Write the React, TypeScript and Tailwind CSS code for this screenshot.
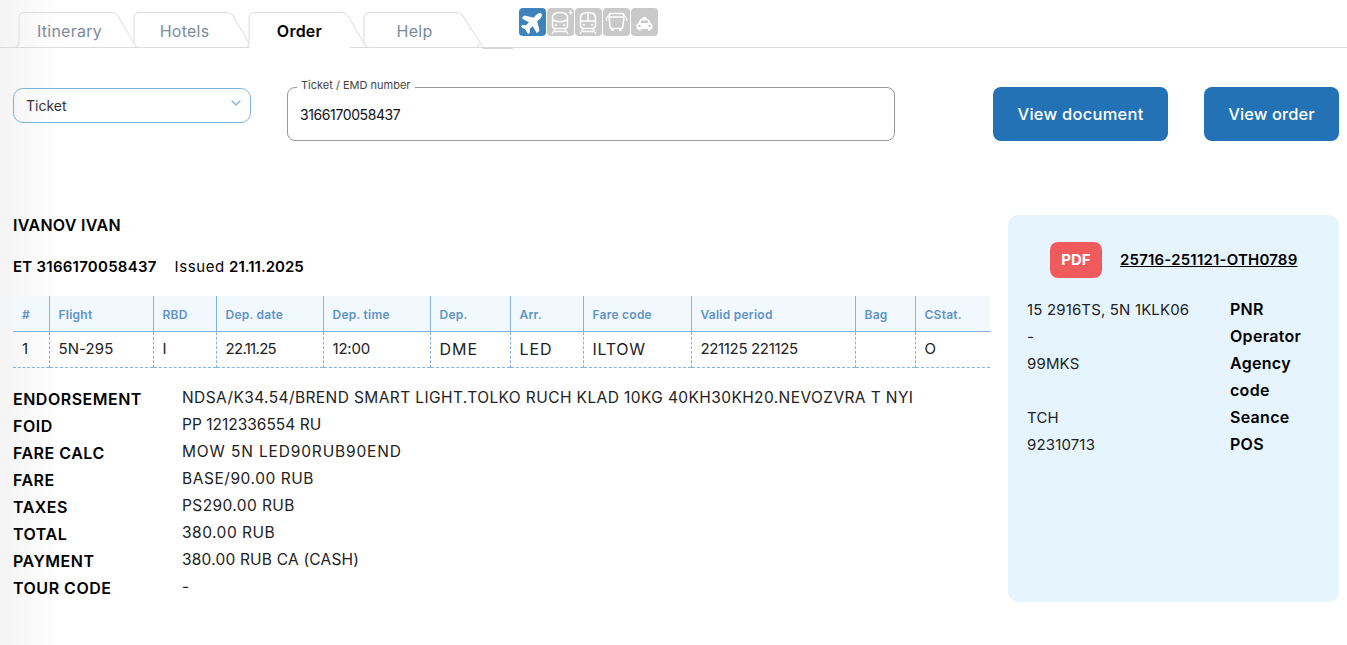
import { ChevronDown } from "lucide-react";
import { FaPlane } from "react-icons/fa";

const columns = [
	{ name: "#", width: "w-[36px]", value: "1", cell: "" },
	{ name: "Flight", width: "w-[104px]", value: "5N-295", cell: "tracking-[0.1px]" },
	{ name: "RBD", width: "w-[63px]", value: "I", cell: "" },
	{ name: "Dep. date", width: "w-[107px]", value: "22.11.25", cell: "tracking-[-0.7px]" },
	{ name: "Dep. time", width: "w-[107px]", value: "12:00", cell: "tracking-[-0.2px]" },
	{ name: "Dep.", width: "w-[80px]", value: "DME", cell: "text-[16px] tracking-[1px]" },
	{ name: "Arr.", width: "w-[73px]", value: "LED", cell: "text-[16px] tracking-[0.9px]" },
	{ name: "Fare code", width: "w-[108px]", value: "ILTOW", cell: "text-[16px] tracking-[0.7px]" },
	{ name: "Valid period", width: "w-[164px]", value: "221125 221125", cell: "tracking-[-0.35px]" },
	{ name: "Bag", width: "w-[60px]", value: "", cell: "" },
	{ name: "CStat.", width: "w-[75px]", value: "O", cell: "" },
];

const details = [
	["ENDORSEMENT", "NDSA/K34.54/BREND SMART LIGHT.TOLKO RUCH KLAD 10KG 40KH30KH20.NEVOZVRA T NYI", "tracking-[0.4px]"],
	["FOID", "PP 1212336554 RU", "tracking-[0px]"],
	["FARE CALC", "MOW 5N LED90RUB90END", "tracking-[0.85px]"],
	["FARE", "BASE/90.00 RUB", "tracking-[0.55px]"],
	["TAXES", "PS290.00 RUB", "tracking-[0.4px]"],
	["TOTAL", "380.00 RUB", "tracking-[0.5px]"],
	["PAYMENT", "380.00 RUB CA (CASH)", "tracking-[0.2px]"],
	["TOUR CODE", "-", ""],
];

function Tab({ label, active, first, last }: { label: string; active?: boolean; first?: boolean; last?: boolean }) {
	return (
		<div className="relative h-[36px] w-[115px] shrink-0">
			<svg className="absolute left-0 top-0 overflow-visible" width="136" height="37" fill="none">
				{first ? (
					<path d="M-19 35.5H-6Q0 35.5 0 30V6Q0 .5 6 .5H93Q97 .5 99 4L115 31" stroke="#dcdcdc" />
				) : (
					<path
						d={last ? "M0 30V6Q0 .5 6 .5H93Q97 .5 99 4L119 35.5" : "M0 30V6Q0 .5 6 .5H93Q97 .5 99 4L115 31"}
						stroke="#dcdcdc"
						fill={active ? "#fff" : "none"}
					/>
				)}
				{!first && !active && <path d="M0 30Q0 35.5 6 35.5H111Q115 35.5 115 31" stroke="#dcdcdc" />}
			</svg>
			{active && <div className="absolute left-px top-[35px] h-px w-[100px] bg-white" />}
			<span
				className={`absolute left-0 top-[9px] w-[101px] text-center text-[16px] leading-[20px] tracking-[0.25px] ${
					active ? "font-semibold text-black" : "text-[#7d8b99]"
				}`}
			>
				{label}
			</span>
		</div>
	);
}

function ModeIcon({ children, active }: { children: React.ReactNode; active?: boolean }) {
	return (
		<div
			className={`flex h-[28px] w-[27px] items-center justify-center rounded-[4px] text-white ${
				active ? "bg-[#3f83bd]" : "bg-[#c9c9c9]"
			}`}
		>
			{children}
		</div>
	);
}

function TrainIcon({ split, plus }: { split?: boolean; plus?: boolean }) {
	return (
		<svg width="27" height="28" viewBox="0 0 27 28" fill="none" stroke="currentColor" strokeWidth="1.5">
			<path d="M8 5.5Q13 3.5 18 5.5Q20.5 6.500 20.500 10V17Q20.500 20.500 17.500 20.500H8.500Q5.500 20.500 5.500 17V10Q5.500 6.500 8 5.500Z" />
			{split ? <path d="M6 13H20M13 5V13" /> : <path d="M6 12Q13 15.500 20 12" />}
			<path d="M8.500 20.500L5 26M17.500 20.500L21 26M7 23.500H19" strokeWidth="1.300" />
			<circle cx="9" cy="17" r="1" fill="currentColor" stroke="none" />
			<circle cx="17" cy="17" r="1" fill="currentColor" stroke="none" />
			{plus && <path d="M23.500 2V7M21 4.500H26" strokeWidth="1.200" />}
		</svg>
	);
}

function BusIcon() {
	return (
		<svg width="27" height="28" viewBox="0 0 27 28" fill="none" stroke="currentColor" strokeWidth="1.600">
			<path d="M8 5.500H19Q21 5.500 21 8L20 18Q20 20.500 18 20.500H9Q7 20.500 7 18L6 8Q6 5.500 8 5.500Z" />
			<path d="M6.500 9H20.500M3.500 9V13M23.500 9V13M4 8.500H6M21 8.500H23" strokeWidth="1.300" />
			<path d="M9.500 20.500V23M17.500 20.500V23" strokeWidth="2.400" />
		</svg>
	);
}

function CarIcon() {
	return (
		<svg width="27" height="28" viewBox="0 0 27 28" fill="currentColor">
			<path d="M11 11L12 9H15L16 11H17Q18 11 18.500 12.500L19.500 15Q21.500 15.500 21.500 17.500V21H19.500V22.500H17V21H10V22.500H7.500V21H5.500V17.500Q5.500 15.500 7.500 15L8.500 12.500Q9 11 10 11Z" />
			<path d="M10.300 12.500H16.700L17.500 15H9.500Z" fill="#c9c9c9" />
			<circle cx="8.500" cy="18" r="1.200" fill="#c9c9c9" />
			<circle cx="18.500" cy="18" r="1.200" fill="#c9c9c9" />
		</svg>
	);
}

export default function App() {
	return (
		<div className="h-[645px] w-[1347px] overflow-hidden bg-[linear-gradient(to_right,#f4f4f4,#ffffff_60px)] font-['Inter',sans-serif] text-[#111]">
			<div className="flex h-[48px] items-start border-b border-[#dcdcdc]">
				<div className="relative ml-[19px] mt-[12px] flex w-[500px]">
					<Tab label="Itinerary" first />
					<Tab label="Hotels" />
					<Tab label="Order" active />
					<Tab label="Help" last />
					<div className="absolute left-[464px] top-[35px] h-[2px] w-[30px] bg-[#d6d6d6]" />
				</div>
				<div className="mt-[8px] flex gap-px">
					<ModeIcon active>
						<FaPlane size={24} className="-rotate-45" />
					</ModeIcon>
					<ModeIcon>
						<TrainIcon plus />
					</ModeIcon>
					<ModeIcon>
						<TrainIcon split />
					</ModeIcon>
					<ModeIcon>
						<BusIcon />
					</ModeIcon>
					<ModeIcon>
						<CarIcon />
					</ModeIcon>
				</div>
			</div>

			<div className="flex items-start pl-[13px] pt-[39px]">
				<div className="mt-px flex h-[35px] w-[238px] items-center justify-between rounded-[10px] border border-[#7fb4e2] pl-[12px] pr-[6px] text-[14px]">
					<span className="text-[#333]">Ticket</span>
					<ChevronDown size={16} className="mb-[6px] text-[#7fb4e2]" />
				</div>
				<div className="relative ml-[36px] flex h-[54px] w-[608px] items-center rounded-[8px] border border-[#999] pl-[12px] text-[14px] tracking-[-0.4px]">
					<span className="absolute left-[9px] top-[-11px] bg-white px-[4px] text-[11px] leading-[16px] tracking-normal text-[#444]">
						Ticket / EMD number
					</span>
					3166170058437
				</div>
				<button className="ml-[98px] h-[54px] w-[175px] rounded-[8px] bg-[#2272b5] text-[16.5px] font-medium tracking-[0.25px] text-white">
					View document
				</button>
				<button className="ml-[36px] h-[54px] w-[135px] rounded-[8px] bg-[#2272b5] text-[16.5px] font-medium tracking-[0.1px] text-white">
					View order
				</button>
			</div>

			<div className="flex items-start pl-[13px] pt-[74px]">
				<div className="w-[977px]">
					<div className="text-[16px] font-semibold leading-[20px] tracking-[0.3px] text-black">IVANOV IVAN</div>
					<div className="mt-[22px] text-[15px] leading-[20px] text-black">
						<b className="font-semibold tracking-[0.25px]">ET 3166170058437</b>
						<span className="ml-[18px] tracking-[0.6px]">Issued</span> <b className="font-semibold">21.11.2025</b>
					</div>

					<table className="mt-[19px] w-[977px] table-fixed border-collapse">
						<thead>
							<tr className="h-[35px] border-b border-[#84b3df] bg-[#f1f8fe]">
								{columns.map((c, i) => (
									<th
										key={c.name}
										className={`${c.width} ${i ? "border-l border-[#84b3df]" : ""} pl-[9px] pt-[4px] text-left text-[12px] font-semibold tracking-[0.25px] text-[#5f93c6]`}
									>
										{c.name}
									</th>
								))}
							</tr>
						</thead>
						<tbody>
							<tr className="h-[36px] border-b border-dashed border-[#84b3df]">
								{columns.map((c, i) => (
									<td
										key={c.name}
										className={`${i ? "border-l border-dashed border-[#84b3df]" : ""} pl-[9px] text-[15px] text-[#222] ${c.cell}`}
									>
										{c.value}
									</td>
								))}
							</tr>
						</tbody>
					</table>

					<div className="mt-[20px] grid grid-cols-[169px_1fr] auto-rows-[27px]">
						{details.map(([label, value, spacing]) => (
							<div key={label} className="contents">
								<div className="text-[16px] font-semibold leading-[22px] tracking-[0.5px] text-black">{label}</div>
								<div className={`${spacing} text-[15.5px] leading-[20px] text-[#222]`}>{value}</div>
							</div>
						))}
					</div>
				</div>

				<div className="ml-[18px] h-[387px] w-[331px] rounded-[10px] bg-[#e6f4fe] px-[19px] pt-[27px]">
					<div className="ml-[23px] flex items-center">
						<div className="flex h-[36px] w-[52px] items-center justify-center rounded-[8px] bg-[#ef5a5c] text-[15px] font-bold text-white">
							PDF
						</div>
						<a className="ml-[18px] text-[15px] font-semibold tracking-[0.2px] text-black underline">
							25716-251121-OTH0789
						</a>
					</div>
					<div className="mt-[18px] flex text-[15px] leading-[27px]">
						<div className="w-[203px] tracking-[0.15px] text-[#222]">
							<div>15 2916TS, 5N 1KLK06</div>
							<div>-</div>
							<div>99MKS</div>
							<div className="h-[27px]" />
							<div>TCH</div>
							<div>92310713</div>
						</div>
						<div className="text-[16px] font-semibold tracking-[0.3px] text-black">
							<div>PNR</div>
							<div>Operator</div>
							<div>Agency</div>
							<div>code</div>
							<div>Seance</div>
							<div>POS</div>
						</div>
					</div>
				</div>
			</div>
		</div>
	);
}
